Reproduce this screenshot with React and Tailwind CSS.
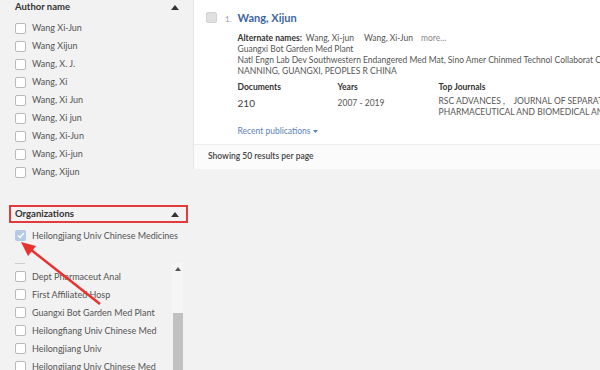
const authors = [
  'Wang Xi-Jun',
  'Wang Xijun',
  'Wang, X. J.',
  'Wang, Xi',
  'Wang, Xi Jun',
  'Wang, Xi jun',
  'Wang, Xi-Jun',
  'Wang, Xi-jun',
  'Wang, Xijun',
]

const orgs = [
  'Dept Pharmaceut Anal',
  'First Affiliated Hosp',
  'Guangxi Bot Garden Med Plant',
  'Heilongfiang Univ Chinese Med',
  'Heilongjiang Univ',
  'Heilongjiang Univ Chinese Med',
]

function Caret() {
  return (
    <svg width="8" height="5" viewBox="0 0 8 5" className="shrink-0">
      <path d="M0 5 L4 0 L8 5 Z" fill="#333" />
    </svg>
  )
}

function Box({ checked }) {
  if (checked)
    return (
      <span className="flex h-[11px] w-[11px] shrink-0 items-center justify-center rounded-[2px] bg-[#b4c9e3]">
        <svg width="8" height="7" viewBox="0 0 8 7">
          <path d="M1 3.5 L3 5.5 L7 1" stroke="#fff" strokeWidth="1.5" fill="none" />
        </svg>
      </span>
    )
  return <span className="h-[11px] w-[11px] shrink-0 rounded-[2px] border border-[#b9b9b9] bg-white" />
}

function Row({ label, checked }) {
  return (
    <div className="flex h-[18px] items-center gap-[6px] whitespace-nowrap text-[9px] text-[#555]">
      <Box checked={checked} />
      <span>{label}</span>
    </div>
  )
}

export default function App() {
  return (
    <div className="relative flex h-[370px] w-[600px] overflow-hidden bg-[#f2f2f2] font-['Lato',sans-serif]">
      {/* facets sidebar */}
      <aside className="flex w-[193px] shrink-0 flex-col pl-[15px] pr-[10px]">
        <div className="flex h-[14px] items-center justify-between pr-[4px] text-[9.5px] font-bold text-[#333]">
          <span>Author name</span>
          <Caret />
        </div>
        <div className="mt-[5px] flex flex-col">
          {authors.map((a) => (
            <Row key={a} label={a} />
          ))}
        </div>
        <div className="mt-[12px] h-px bg-[#e2e2e2]" />

        <div className="-ml-[6px] -mr-[5px] mt-[12px] flex h-[19px] items-center justify-between border-2 border-[#e23b3b] pl-[4px] pr-[7px] text-[9.5px] font-bold text-[#333]">
          <span>Organizations</span>
          <Caret />
        </div>
        <div className="mt-[3px]">
          <Row label="Heilongjiang Univ Chinese Medicines" checked />
        </div>
        <div className="mt-[14px] h-px bg-[#e2e2e2]" />

        {/* scrolling org list */}
        <div className="flex flex-1 pt-[5px]">
          <div className="flex flex-1 flex-col">
            <div className="h-px w-[10px] bg-[#cfcfcf]" />
            <div className="mt-[3px] flex flex-col">
              {orgs.map((o) => (
                <Row key={o} label={o} />
              ))}
            </div>
          </div>
          <div className="flex w-[11px] shrink-0 flex-col items-center bg-[#f5f5f5]">
            <div className="flex h-[12px] items-center">
              <svg width="6" height="4" viewBox="0 0 6 4">
                <path d="M0 4 L3 0 L6 4 Z" fill="#555" />
              </svg>
            </div>
            <div className="mt-[38px] w-[10px] flex-1 bg-[#c1c1c1]" />
          </div>
        </div>
      </aside>

      {/* results */}
      <main className="flex-1">
        <div className="border-l border-[#e6e6e6] bg-white">
          <div className="flex pl-[12px] pt-[12px]">
            <span className="h-[11px] w-[11px] shrink-0 rounded-[2px] border border-[#d2d2d2] bg-[#e0e0e0]" />
            <span className="ml-[8px] mt-[1px] text-[8px] text-[#999]">1.</span>
            <div className="ml-[6px] flex-1">
              <div className="-mt-[2px] text-[11px] font-bold text-[#3b66a3]">Wang, Xijun</div>
              <div className="mt-[5px] flex whitespace-nowrap text-[8.5px] text-[#555]">
                <span className="font-bold text-[#333]">Alternate names:</span>
                <span className="ml-[4px]">Wang, Xi-jun</span>
                <span className="ml-[10px]">Wang, Xi-Jun</span>
                <span className="ml-[8px] text-[#888]">more...</span>
              </div>
              <div className="whitespace-nowrap text-[8.5px] leading-[11px] text-[#555]">
                <div>Guangxi Bot Garden Med Plant</div>
                <div>Natl Engn Lab Dev Southwestern Endangered Med Mat, Sino Amer Chinmed Technol Collaborat Ctr</div>
                <div>NANNING, GUANGXI, PEOPLES R CHINA</div>
              </div>
              <div className="mt-[4px] flex whitespace-nowrap text-[8.5px]">
                <div className="w-[100px]">
                  <div className="font-bold text-[#333]">Documents</div>
                  <div className="mt-[2px] text-[10px] text-[#444]">210</div>
                </div>
                <div className="w-[101px]">
                  <div className="font-bold text-[#333]">Years</div>
                  <div className="mt-[3px] text-[#555]">2007 - 2019</div>
                </div>
                <div>
                  <div className="font-bold text-[#333]">Top Journals</div>
                  <div className="mt-[2px] leading-[11px] text-[#555]">
                    <div>RSC ADVANCES ,&nbsp;&nbsp;&nbsp; JOURNAL OF SEPARATION SCIENCE</div>
                    <div>PHARMACEUTICAL AND BIOMEDICAL ANALYSIS</div>
                  </div>
                </div>
              </div>
              <div className="mt-[7px] flex items-center gap-[3px] pb-[6px] text-[8.5px] text-[#5b84b6]">
                Recent publications
                <svg width="5" height="3" viewBox="0 0 5 3">
                  <path d="M0 0 L5 0 L2.5 3 Z" fill="#5b84b6" />
                </svg>
              </div>
            </div>
          </div>
          <div className="flex h-[25px] items-center border-t border-[#ececec] bg-[#fbfbfb] pl-[14px] text-[8.5px] font-semibold text-[#444]">
            Showing 50 results per page
          </div>
        </div>
      </main>

      {/* annotation arrow */}
      <svg className="pointer-events-none absolute left-0 top-0" width="600" height="370">
        <line x1="100" y1="304" x2="30" y2="249" stroke="#e8322e" strokeWidth="2.5" />
        <polygon points="21,242 36,246 28,256" fill="#e8322e" />
      </svg>
    </div>
  )
}
